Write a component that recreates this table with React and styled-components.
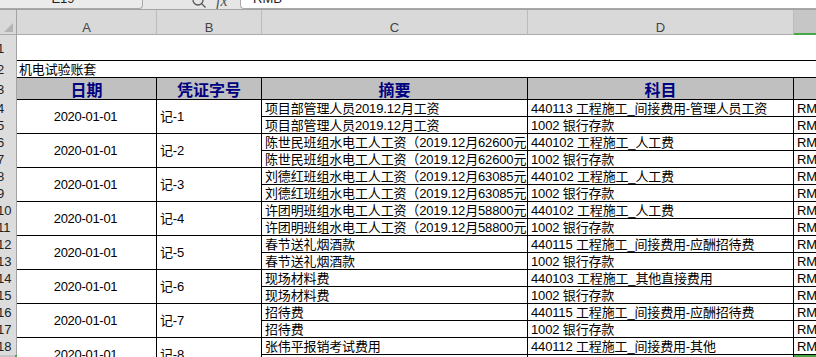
import React from "react";
import styled, { createGlobalStyle } from "styled-components";

const GlobalStyle = createGlobalStyle`
  html, body {
    margin: 0;
    padding: 0;
    background: #fff;
  }
  body {
    font-family: "Liberation Sans", "Noto Sans CJK SC", sans-serif;
  }
`;

const Window = styled.div`
  width: 816px;
  height: 357px;
  overflow: hidden;
  display: flex;
  flex-direction: column;
`;

/* formula bar, only its lower edge is in view */
const FormulaBar = styled.div`
  flex: none;
  height: 9px;
  background: #e6e6e6;
  border-bottom: 1px solid #a3a3a3;
  display: flex;
  align-items: flex-end;
  overflow: hidden;
`;

const NameBox = styled.div`
  flex: none;
  width: 143px;
  height: 20px;
  box-sizing: border-box;
  padding-right: 16px;
  background: #ebebeb;
  border-right: 1px solid #a8a8a8;
  border-bottom: 1px solid #a8a8a8;
  border-bottom-right-radius: 4px;
  display: flex;
  align-items: center;
  justify-content: center;
  font-size: 13px;
  color: #222;
`;

const Tools = styled.div`
  flex: none;
  width: 97px;
  box-sizing: border-box;
  padding-left: 48px;
  display: flex;
  align-items: flex-end;
  gap: 9px;
  color: #555;
`;

const Fx = styled.span`
  font-family: "Liberation Serif", serif;
  font-style: italic;
  font-size: 16px;
  line-height: 12px;
  margin-bottom: 2px;
`;

const FormulaInput = styled.div`
  flex: 1;
  height: 20px;
  box-sizing: border-box;
  padding-left: 12px;
  background: #fff;
  border-left: 1px solid #a8a8a8;
  border-bottom: 1px solid #a8a8a8;
  border-bottom-left-radius: 4px;
  display: flex;
  align-items: center;
  font-size: 13px;
  color: #222;
`;

/* sheet */
const Sheet = styled.div`
  display: grid;
  grid-template-columns: 17px 140px 105px 266px 266px 80px;
  grid-template-rows: 25px 26px 17px 22px;
  grid-auto-rows: 17px;
  font-size: 13px;
  letter-spacing: -0.15px;
  color: #000;
`;

const Corner = styled.div`
  background: #d9d9d9;
  border-right: 1px solid #a3a3a3;
  border-bottom: 1px solid #ababab;
  display: flex;
  align-items: flex-end;
  justify-content: flex-end;
  padding: 0 3px 2px 0;
`;

const ColHead = styled.div`
  box-sizing: border-box;
  background: ${(p) => (p.$selected ? "#c6c6c6" : "#d9d9d9")};
  border-right: 1px solid #bcbcbc;
  border-bottom: ${(p) => (p.$selected ? "2px solid #45a845" : "1px solid #ababab")};
  padding-top: 10px;
  display: flex;
  align-items: center;
  justify-content: center;
  line-height: 15px;
  letter-spacing: 0;
  color: #444;
`;

const RowHead = styled.div`
  box-sizing: border-box;
  background: ${(p) => (p.$selected ? "#c6c6c6" : "#dcdcdc")};
  border-right: ${(p) => (p.$selected ? "2px solid #45a845" : "1px solid #a3a3a3")};
  display: flex;
  align-items: center;
  overflow: hidden;
  letter-spacing: 0;
  color: #222;
`;

const RowLabel = styled.span`
  margin-left: -3px;
  white-space: nowrap;
`;

const Spacer = styled.div`
  grid-column: 2 / -1;
  border-bottom: 1px solid #000;
`;

const Title = styled.div`
  grid-column: 2 / -1;
  box-sizing: border-box;
  border-bottom: 1px solid #000;
  padding-left: 2px;
  display: flex;
  align-items: center;
  line-height: 15px;
  white-space: nowrap;
`;

const HeadCell = styled.div`
  box-sizing: border-box;
  background: #c0c0c0;
  border-right: 1px solid #000;
  border-bottom: 1px solid #000;
  display: flex;
  align-items: center;
  justify-content: center;
  font-size: 16px;
  font-weight: bold;
  letter-spacing: 0;
  color: #000080;
`;

const Cell = styled.div`
  box-sizing: border-box;
  grid-row: ${(p) => (p.$rows ? `span ${p.$rows}` : "auto")};
  border-right: 1px solid #000;
  border-bottom: 1px solid #000;
  padding: 0 2px 0 ${(p) => (p.$center ? 0 : 3)}px;
  display: flex;
  align-items: center;
  justify-content: ${(p) => (p.$center ? "center" : "flex-start")};
  line-height: 15px;
  letter-spacing: ${(p) => (p.$center ? "-0.3px" : "inherit")};
  white-space: nowrap;
  overflow: hidden;
  box-shadow: ${(p) => (p.$selected ? "inset 0 0 0 2px #45a845" : "none")};
`;

const columns = ["A", "B", "C", "D", "E"];

const vouchers = [
  {
    no: "记-1",
    lines: [
      ["项目部管理人员2019.12月工资", "440113 工程施工_间接费用-管理人员工资"],
      ["项目部管理人员2019.12月工资", "1002 银行存款"],
    ],
  },
  {
    no: "记-2",
    lines: [
      ["陈世民班组水电工人工资（2019.12月62600元）", "440102 工程施工_人工费"],
      ["陈世民班组水电工人工资（2019.12月62600元）", "1002 银行存款"],
    ],
  },
  {
    no: "记-3",
    lines: [
      ["刘德红班组水电工人工资（2019.12月63085元）", "440102 工程施工_人工费"],
      ["刘德红班组水电工人工资（2019.12月63085元）", "1002 银行存款"],
    ],
  },
  {
    no: "记-4",
    lines: [
      ["许团明班组水电工人工资（2019.12月58800元）", "440102 工程施工_人工费"],
      ["许团明班组水电工人工资（2019.12月58800元）", "1002 银行存款"],
    ],
  },
  {
    no: "记-5",
    lines: [
      ["春节送礼烟酒款", "440115 工程施工_间接费用-应酬招待费"],
      ["春节送礼烟酒款", "1002 银行存款"],
    ],
  },
  {
    no: "记-6",
    lines: [
      ["现场材料费", "440103 工程施工_其他直接费用"],
      ["现场材料费", "1002 银行存款"],
    ],
  },
  {
    no: "记-7",
    lines: [
      ["招待费", "440115 工程施工_间接费用-应酬招待费"],
      ["招待费", "1002 银行存款"],
    ],
  },
  {
    no: "记-8",
    lines: [
      ["张伟平报销考试费用", "440112 工程施工_间接费用-其他"],
      ["张伟平报销考试费用", "1002 银行存款"],
    ],
  },
];

const SELECTED_ROW = 19;

function VoucherRows({ voucher, firstRow }) {
  return voucher.lines.map(([summary, account], i) => {
    const row = firstRow + i;
    return (
      <React.Fragment key={row}>
        <RowHead $selected={row === SELECTED_ROW}>
          <RowLabel>{row}</RowLabel>
        </RowHead>
        {i === 0 && (
          <>
            <Cell $rows={2} $center>2020-01-01</Cell>
            <Cell $rows={2}>{voucher.no}</Cell>
          </>
        )}
        <Cell>{summary}</Cell>
        <Cell>{account}</Cell>
        <Cell $selected={row === SELECTED_ROW}>RMB</Cell>
      </React.Fragment>
    );
  });
}

function App() {
  return (
    <>
      <GlobalStyle />
      <Window>
        <FormulaBar>
          <NameBox>E19</NameBox>
          <Tools>
            <svg width="16" height="16" viewBox="0 0 16 16" fill="none" stroke="#555" strokeWidth="1.3">
              <circle cx="7" cy="7" r="5" />
              <path d="M10.6 10.6 L14.5 14.5" />
            </svg>
            <Fx>fx</Fx>
          </Tools>
          <FormulaInput>RMB</FormulaInput>
        </FormulaBar>

        <Sheet>
          <Corner>
            <svg width="9" height="9" viewBox="0 0 9 9">
              <polygon points="9,0 9,9 0,9" fill="#b4b4b4" />
            </svg>
          </Corner>
          {columns.map((c) => (
            <ColHead key={c} $selected={c === "E"}>{c}</ColHead>
          ))}

          <RowHead><RowLabel>1</RowLabel></RowHead>
          <Spacer />

          <RowHead><RowLabel>2</RowLabel></RowHead>
          <Title>机电试验账套</Title>

          <RowHead><RowLabel>3</RowLabel></RowHead>
          {["日期", "凭证字号", "摘要", "科目", ""].map((h, i) => (
            <HeadCell key={i}>{h}</HeadCell>
          ))}

          {vouchers.map((v, i) => (
            <VoucherRows key={v.no} voucher={v} firstRow={4 + i * 2} />
          ))}
        </Sheet>
      </Window>
    </>
  );
}

export default App;
